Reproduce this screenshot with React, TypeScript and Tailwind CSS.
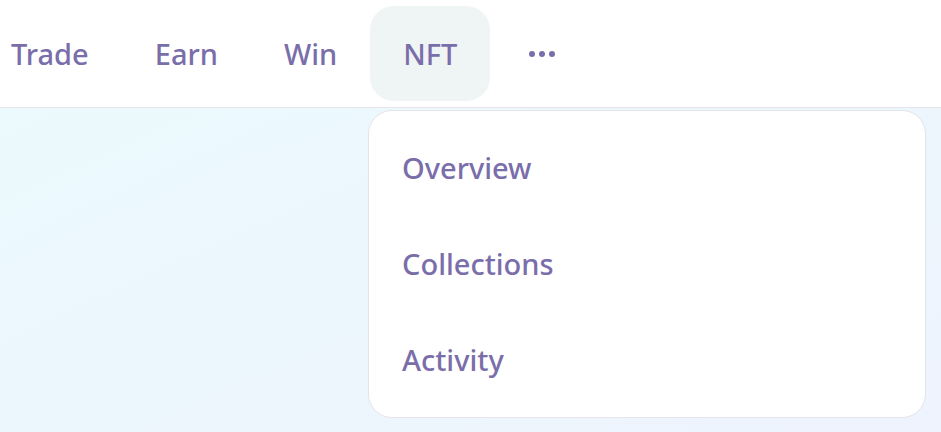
export default function App() {
  const nav = ["Trade", "Earn", "Win"];
  const sub = ["Overview", "Collections", "Activity"];
  return (
    <div
      className="relative h-[432px] w-[941px] overflow-hidden bg-gradient-to-br from-[#ebfbfe] to-[#eef3fd] text-[#7a6eaa]"
      style={{ fontFamily: '"Noto Sans", "Open Sans", sans-serif' }}
    >
      {/* top nav */}
      <header className="flex h-[108px] items-center border-b border-[#e7e3eb] bg-white">
        <nav className="ml-[-22px] flex items-center">
          {nav.map((n) => (
            <div key={n} className="flex h-[95px] items-center px-[33px] text-[29px] font-medium">
              {n}
            </div>
          ))}
          <div className="flex h-[95px] items-center rounded-[24px] bg-[#eff4f5] px-[33px] text-[29px] font-medium">
            NFT
          </div>
          <div className="flex h-[95px] items-center gap-[4px] px-[39px]">
            <span className="h-[6px] w-[6px] rounded-full bg-[#7a6eaa]" />
            <span className="h-[6px] w-[6px] rounded-full bg-[#7a6eaa]" />
            <span className="h-[6px] w-[6px] rounded-full bg-[#7a6eaa]" />
          </div>
        </nav>
      </header>

      {/* NFT dropdown */}
      <div className="absolute left-[368px] top-[110px] flex w-[558px] flex-col rounded-[24px] border border-[#e7e3eb] bg-white py-[9px]">
        {sub.map((s) => (
          <div key={s} className="flex h-[96px] items-center px-[33px] text-[29px] font-medium">
            {s}
          </div>
        ))}
      </div>
    </div>
  );
}
